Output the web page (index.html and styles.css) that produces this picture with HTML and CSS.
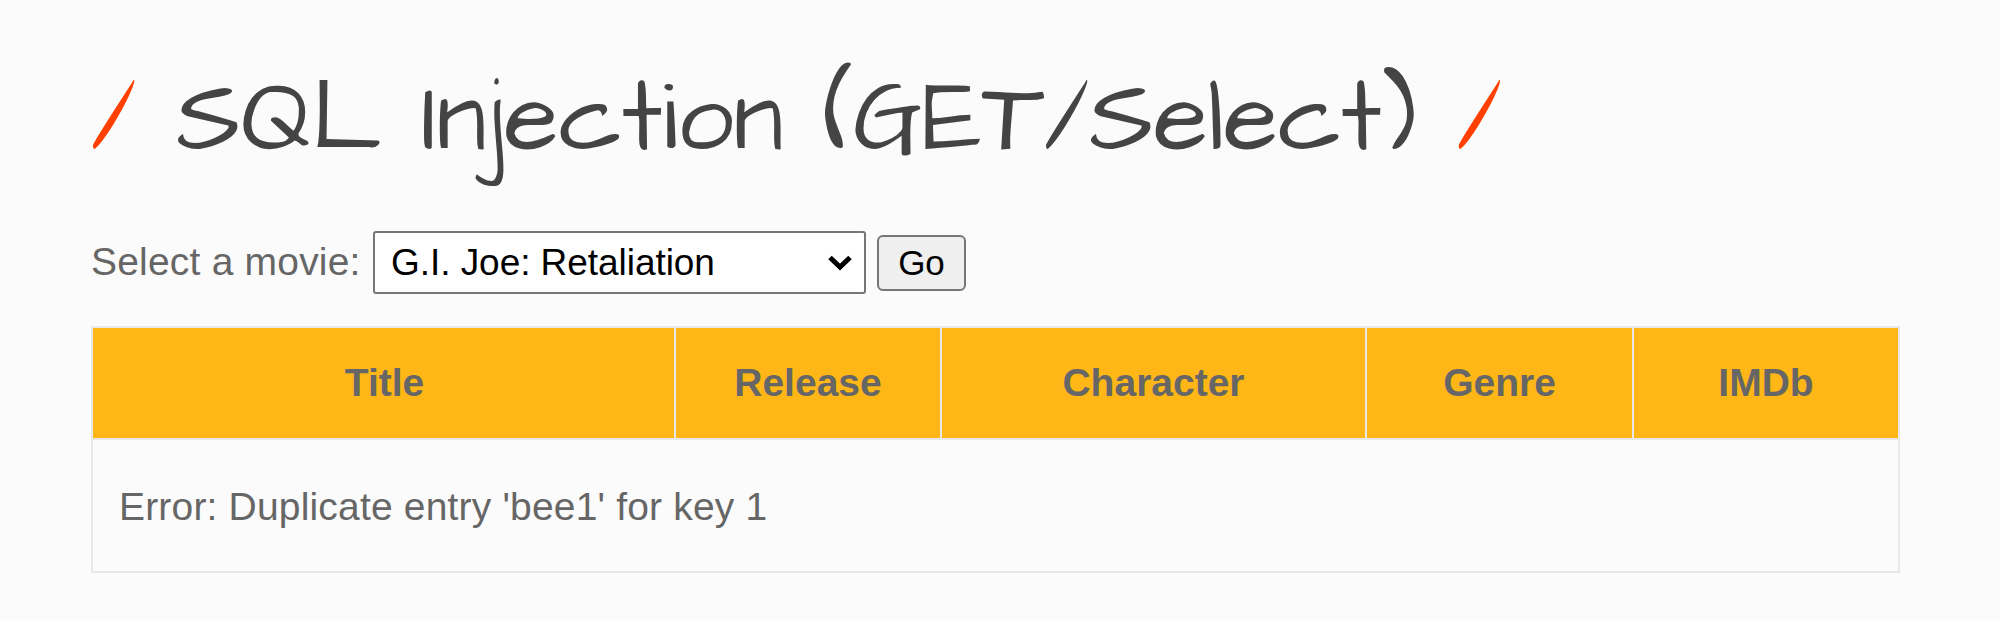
FILE: index.html
```html
<!DOCTYPE html>
<html lang="en">
<head>
<meta charset="utf-8">
<title>SQL Injection (GET/Select)</title>
<link rel="stylesheet" href="styles.css">
</head>
<body>
<main class="page">
  <h1 class="heading"><span class="slash">/</span> SQL Injection (GET/Select) <span class="slash">/</span></h1>
  <form class="picker">
    <label class="picker-label" for="movie">Select a movie:</label>
    <div class="select-wrap">
      <select class="movie" id="movie"><option>G.I. Joe: Retaliation</option></select>
      <svg class="chevron" width="26" height="18" viewBox="0 0 26 18"><path d="M3 3.5 13 13 23 3.5"/></svg>
    </div>
    <button class="go" type="button">Go</button>
  </form>
  <table class="movies">
    <colgroup><col class="c-title"><col class="c-release"><col class="c-character"><col class="c-genre"><col class="c-imdb"></colgroup>
    <thead><tr><th class="first">Title</th><th>Release</th><th>Character</th><th>Genre</th><th>IMDb</th></tr></thead>
    <tbody><tr><td colspan="5">Error: Duplicate entry 'bee1' for key 1</td></tr></tbody>
  </table>
</main>
</body>
</html>
```
FILE: styles.css
```css
* { box-sizing: border-box; }
body {
  margin: 0;
  background: #fbfbfb;
  color: #666;
  font-family: Arial, "Liberation Sans", sans-serif;
  font-size: 39px;
}
.page { padding: 50px 100px 0 91px; }
.heading {
  margin: 0;
  height: 180px;
  color: #444;
  font: 400 100px/140px "Architects Daughter", "DejaVu Sans", sans-serif;
  white-space: nowrap;
  transform: scaleY(1.03);
  transform-origin: 0 98px;
}
.slash { color: #ff4000; }
.picker { display: flex; align-items: center; height: 64px; }
.picker-label { width: 282px; white-space: nowrap; letter-spacing: 0.2px; }
.select-wrap { position: relative; width: 493px; height: 63px; }
.movie {
  appearance: none;
  width: 100%;
  height: 100%;
  padding: 0 16px;
  border: 2px solid #767676;
  border-radius: 3px;
  background: #fff;
  color: #000;
  font: 37px Arial, "Liberation Sans", sans-serif;
  letter-spacing: -0.05px;
}
.chevron { position: absolute; right: 13px; top: 23px; fill: none; stroke: #000; stroke-width: 5; }
.go {
  width: 89px;
  height: 56px;
  margin: 1px 0 0 11px;
  padding: 0;
  border: 2px solid #767676;
  border-radius: 6px;
  background: #efefef;
  color: #000;
  font: 35px Arial, "Liberation Sans", sans-serif;
}
.movies {
  width: 1809px;
  margin-top: 32px;
  border-collapse: collapse;
  table-layout: fixed;
}
.movies th, .movies td { border: 2px solid #e8e8e8; padding: 0; }
.movies th { height: 112px; background: #ffb717; }
.movies th.first { padding-left: 2px; }
.movies td { height: 133px; padding: 2px 0 0 26px; letter-spacing: 0.18px; }
.c-title { width: 583px; }
.c-release { width: 266px; }
.c-character { width: 425px; }
.c-genre { width: 267px; }
.c-imdb { width: 266px; }
```
